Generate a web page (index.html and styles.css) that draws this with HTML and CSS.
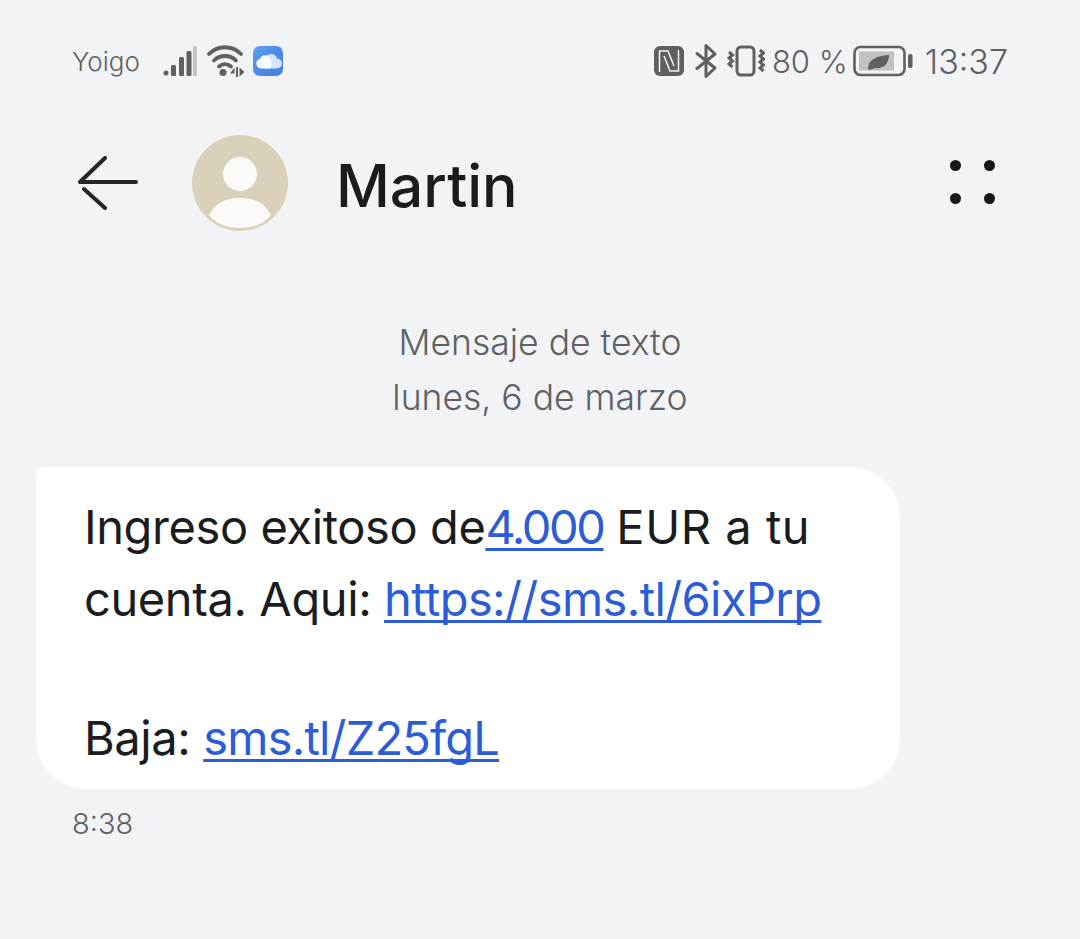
FILE: index.html
```html
<!DOCTYPE html>
<html lang="es">
<head>
<meta charset="utf-8">
<title>Martin</title>
<link rel="stylesheet" href="styles.css">
</head>
<body>
<div class="screen">
  <div class="status">
    <div class="status-left">
      <span class="carrier">Yoigo</span>
      <svg class="i-signal" width="34" height="32" viewBox="0 0 34 32"><g fill="#5f6063"><circle cx="3" cy="28" r="2.500"/><rect x="8" y="20" width="5" height="11" rx="1.500"/><rect x="16" y="12" width="5" height="19" rx="1.500"/><rect x="23.500" y="6" width="5" height="25" rx="1.500"/></g><rect x="30" y="1" width="4" height="30" rx="1.500" fill="#c4c5c8"/></svg>
      <svg class="i-wifi" width="38" height="32" viewBox="0 0 38 32"><g fill="none" stroke="#5f6063" stroke-width="3.800" stroke-linecap="round"><path d="M2 9C11 0 25 0 34 9"/><path d="M7 15.500C13 9.500 23 9.500 29 15.500"/><path d="M12 21.500C15.500 18.500 20.500 18.500 24 21.500"/></g><circle cx="16" cy="27.500" r="3.500" fill="#5f6063"/><path d="M23 28.500l4.500-6v6zM29 22h2v10h-2zM32.500 22.500l5 4.500-5 4.500z" fill="#5f6063"/></svg>
      <svg class="i-cloud" width="30" height="30" viewBox="0 0 30 30"><defs><linearGradient id="cloudbg" x1="0" y1="0" x2="1" y2="1"><stop offset="0" stop-color="#5c9cf0"/><stop offset="1" stop-color="#3f7fe0"/></linearGradient></defs><rect width="30" height="30" rx="7" fill="url(#cloudbg)"/><path d="M12 22.500V13a6.500 6.500 0 0 1 6-5 6.500 6.500 0 0 1 6 4.500 5 5 0 0 1 0 10z" fill="#d5e5fb"/><path d="M8 22.500a5 5 0 0 1-1-9.800 5.500 5.500 0 0 1 10.500 1.300c2 1.500 2 6 -.5 8.500z" fill="#f7fafe"/></svg>
    </div>
    <div class="status-right">
      <svg class="i-nfc" width="30" height="30" viewBox="0 0 30 30"><rect width="30" height="30" rx="6" fill="#5f6063"/><g fill="none" stroke="#f1f3f5" stroke-width="1.500"><path d="M5.500 26V5H14L20 20"/><path d="M24.500 4V25H16L10 10"/></g></svg>
      <svg class="i-bt" width="22" height="34" viewBox="0 0 22 34"><path d="M2 9.500L20 24l-9 8.500V1.500l9 8.500L2 24.500" fill="none" stroke="#5f6063" stroke-width="3" stroke-linejoin="round" stroke-linecap="round"/></svg>
      <svg class="i-vib" width="38" height="32" viewBox="0 0 38 32"><rect x="10" y="2" width="17" height="28" rx="4" fill="none" stroke="#5f6063" stroke-width="3"/><g fill="none" stroke="#5f6063" stroke-width="3"><path d="M2 7l3.500 3-3.500 3 3.500 3-3.500 3 3.500 3"/><path d="M33 5l3.500 3-3.500 3 3.500 3-3.500 3 3.500 3-3.500 3 3.500 3"/></g></svg>
      <span class="batt-text">80 %</span>
      <svg class="i-batt" width="60" height="32" viewBox="0 0 60 32"><rect x="1.500" y="2" width="50" height="28" rx="6" fill="none" stroke="#5f6063" stroke-width="2.600"/><rect x="6" y="6.500" width="35" height="19" fill="#c0c1c3"/><path d="M15 24c0-8 6-13 21-14 0 9-6 14-14 13l-5 2z" fill="#5f6063"/><rect x="55" y="9" width="4.500" height="14" rx="2" fill="#5f6063"/></svg>
      <span class="clock">13:37</span>
    </div>
  </div>

  <div class="appbar">
    <svg class="i-back" width="60" height="54" viewBox="0 0 60 54"><path d="M2 26H58M27 2L2 26M6 33L27 52" fill="none" stroke="#26272a" stroke-width="4" stroke-linecap="round"/></svg>
    <div class="avatar">
      <svg width="96" height="96" viewBox="0 0 96 96"><circle cx="48" cy="48" r="48" fill="#d9d0ba"/><circle cx="48" cy="39" r="17" fill="#fbfaf8"/><path d="M17 80C23 68 34 63 48 63S73 68 79 80C71 90 60 93 48 93S25 90 17 80z" fill="#fbfaf8"/></svg>
    </div>
    <h1 class="name">Martin</h1>
    <div class="more"><i></i><i></i><i></i><i></i></div>
  </div>

  <div class="thread">
    <div class="meta">
      <div>Mensaje de texto</div>
      <div>lunes, 6 de marzo</div>
    </div>
    <div class="bubble">
      <p>Ingreso exitoso de<a class="num" href="#">4.000</a> <span class="tail">EUR a tu</span><br>cuenta. Aqui: <a class="url" href="#">https://sms.tl/6ixPrp</a></p>
      <p>Baja: <a class="short" href="#">sms.tl/Z25fgL</a></p>
    </div>
    <div class="time">8:38</div>
  </div>
</div>
</body>
</html>
```
FILE: styles.css
```css
* { box-sizing: border-box; }
html, body { margin: 0; padding: 0; }
body { background: #f1f3f5; font-family: Inter, "Noto Sans", sans-serif; color: #1b1c1e; }
.screen { width: 1080px; height: 939px; overflow: hidden; display: flex; flex-direction: column; }

.status { height: 90px; padding: 32px 72px 0; display: flex; justify-content: space-between; align-items: center; color: #5f6063; }
.status-left, .status-right { display: flex; align-items: center; }
.carrier { width: 91px; font-size: 26px; font-weight: 300; }
.i-wifi { margin-left: 10px; }
.i-cloud { margin-left: 8px; }
.i-bt { margin-left: 11px; }
.i-vib { margin-left: 10px; }
.batt-text { margin-left: 7px; font-size: 31px; font-weight: 300; }
.i-batt { margin-left: 5px; }
.clock { margin-left: 12px; font-size: 34px; font-weight: 300; }

.appbar { height: 185px; padding: 0 85px 0 78px; display: flex; align-items: center; }
.avatar { margin-left: 54px; height: 96px; }
.name { margin: 6px 0 0 48px; font-size: 59px; font-weight: 500; flex: 1; }
.more { width: 45px; display: grid; grid-template-columns: 11px 11px; justify-content: space-between; row-gap: 22px; margin-top: -2px; }
.more i { width: 11px; height: 11px; border-radius: 50%; background: #17181a; }

.thread { padding: 40px 0 0 36px; }
.meta { width: 1008px; text-align: center; font-size: 35.500px; font-weight: 300; line-height: 55px; color: #606165; }
.bubble { width: 864px; margin-top: 42px; padding: 24px 48px 15px; background: #fff; border-radius: 8px 50px 50px 50px; font-size: 47px; font-weight: 400; line-height: 72px; letter-spacing: -0.400px; }
.bubble p { margin: 0 0 67px; }
.bubble p:last-child { margin: 0; }
.bubble a { color: #2c5dd6; text-decoration: underline; text-underline-offset: 4px; text-decoration-thickness: 2.500px; text-decoration-skip-ink: none; }
.bubble .num { letter-spacing: -2.400px; }
.bubble .tail { letter-spacing: 0.550px; }
.bubble .url { letter-spacing: -0.600px; }
.bubble .short { letter-spacing: -0.800px; }
.time { margin: 17px 0 0 36px; font-size: 29px; font-weight: 300; color: #606165; }
```
